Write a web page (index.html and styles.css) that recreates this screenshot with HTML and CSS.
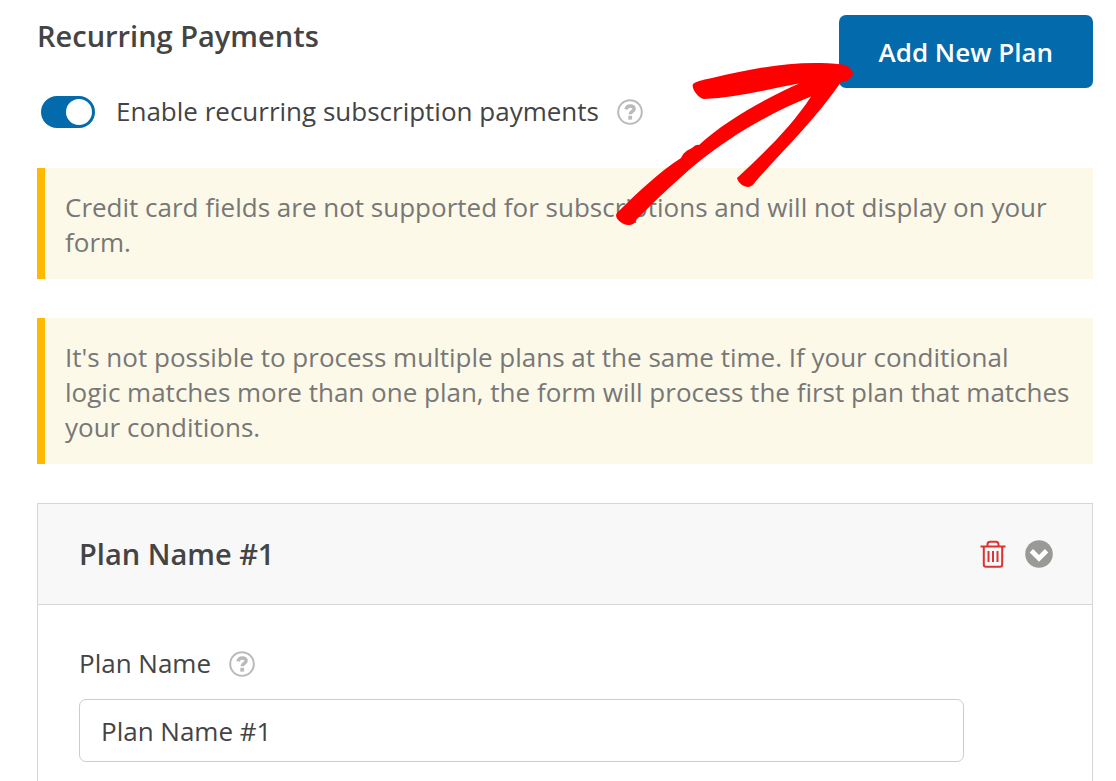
FILE: index.html
```html
<!DOCTYPE html>
<html lang="en">
<head>
<meta charset="UTF-8" />
<meta name="viewport" content="width=device-width, initial-scale=1" />
<title>Recurring Payments</title>
<link rel="stylesheet" href="styles.css">
</head>
<body>

<main class="settings">
  <header class="settings-header">
    <div class="settings-intro">
      <h2>Recurring Payments</h2>
      <div class="toggle-row">
        <input class="toggle" type="checkbox" role="switch" id="enableRecurring" checked />
        <label for="enableRecurring">Enable recurring subscription payments</label>
        <button class="icon-btn" type="button" aria-label="Help: recurring payments">
          <svg viewBox="0 0 26 26" width="26" height="26">
            <circle cx="13" cy="13" r="11.8" fill="none" stroke="#bababa" stroke-width="2" />
            <path d="M9 10.400C9.500 8 11 7 13.200 7c2.500 0 3.900 1.100 3.900 2.900 0 2.800-3.900 2.400-3.900 5.300" fill="none" stroke="#bababa" stroke-width="3.400" />
            <rect x="11.300" y="16.800" width="3.800" height="3.800" fill="#bababa" />
          </svg>
        </button>
      </div>
    </div>
    <div class="add-plan">
      <button class="add-btn" type="button">Add New Plan</button>
      <svg class="arrow" viewBox="608 60 252 170" width="252" height="170" aria-hidden="true">
        <path fill="#f00" d="M693 84C691 88 698 98 704 99C735 98 769 89 799 83.500C767 98 727 119 699 145Q696 144 692 148C685 151 683 154 681 158C658 173 637 193 617 213C613 218 623 225 628 225C633 225 635 223 636 220C658 198 677 180 696 164C732 135 770 113 811 96.500C792 126 765 152 737 178C738 183 744 187 748 187C751 187 754 184 756 181C784 149 816 119 841 82C847 82 853 78 853 73C852 69 848 65 842 64.500C801 60 762 66 712 78Q696 81 693 84Z" />
      </svg>
    </div>
  </header>

  <p class="notice">Credit card fields are not supported for subscriptions and will not display on your form.</p>
  <p class="notice">It's not possible to process multiple plans at the same time. If your conditional<br>
    logic matches more than one plan, the form will process the first plan that matches<br>
    your conditions.</p>

  <section class="plan">
    <div class="plan-head">
      <h3>Plan Name #1</h3>
      <div class="plan-actions">
        <button class="icon-btn" type="button" aria-label="Delete plan">
          <svg viewBox="0 0 26 28" width="26" height="28" fill="none" stroke="#dc3232" stroke-width="2">
            <path d="M.5 6.500h25M7.500 6V4.500C7.500 2.500 8.500 1.800 10 1.800h6c1.500 0 2.500.7 2.500 2.700V6M3.800 7v17.500c0 1.500.7 2.300 2.200 2.300h14c1.500 0 2.200-.8 2.200-2.300V7M8.500 11v11M13 11v11M17.500 11v11" />
          </svg>
        </button>
        <button class="icon-btn" type="button" aria-label="Collapse plan">
          <svg viewBox="0 0 28 28" width="28" height="28">
            <circle cx="14" cy="14" r="13.800" fill="#999996" />
            <path d="M6.400 10.700l7.600 7.700 7.600-7.700" fill="none" stroke="#fff" stroke-width="4.800" />
          </svg>
        </button>
      </div>
    </div>
    <div class="plan-body">
      <div class="field-label">
        <label for="planName">Plan Name</label>
        <button class="icon-btn" type="button" aria-label="Help: plan name">
          <svg viewBox="0 0 26 26" width="26" height="26">
            <circle cx="13" cy="13" r="11.8" fill="none" stroke="#bababa" stroke-width="2" />
            <path d="M9 10.400C9.500 8 11 7 13.200 7c2.500 0 3.900 1.100 3.900 2.900 0 2.800-3.900 2.400-3.900 5.300" fill="none" stroke="#bababa" stroke-width="3.400" />
            <rect x="11.300" y="16.800" width="3.800" height="3.800" fill="#bababa" />
          </svg>
        </button>
      </div>
      <input class="text-input" type="text" id="planName" value="Plan Name #1" />
    </div>
  </section>
</main>

</body>
</html>
```
FILE: styles.css
```css
* {
  box-sizing: border-box;
}
body {
  margin: 0;
  background: #fff;
  color: #444;
  font-family: "Open Sans", "Noto Sans", sans-serif;
  font-size: 26px;
  line-height: 35px;
}
h2, h3, p {
  margin: 0;
}
h2, h3 {
  font-size: 29px;
  font-weight: 600;
  line-height: 42px;
}
.settings {
  display: flex;
  flex-direction: column;
  min-height: 100vh;
  padding: 15px 23px 0 37px;
}
.settings-header {
  display: flex;
  justify-content: space-between;
  align-items: flex-start;
  margin-bottom: 39px;
}
.toggle-row {
  display: flex;
  align-items: center;
  margin-top: 37px;
  padding-left: 4px;
}
.toggle {
  appearance: none;
  width: 54px;
  height: 32px;
  margin: 0 21px 0 0;
  padding: 3px;
  border-radius: 16px;
  background: #036aab;
  display: flex;
  cursor: pointer;
}
.toggle::before {
  content: "";
  width: 26px;
  height: 26px;
  border-radius: 50%;
  background: #fff;
}
.toggle:checked {
  justify-content: flex-end;
}
.icon-btn {
  display: flex;
  padding: 0;
  border: none;
  background: none;
  cursor: pointer;
}
.toggle-row .icon-btn,
.field-label .icon-btn {
  margin-left: 18px;
}
.add-plan {
  position: relative;
}
.add-btn {
  padding: 19px 40px 18px;
  border: none;
  border-radius: 7px;
  background: #036aab;
  color: #fff;
  font: inherit;
  font-weight: 600;
  line-height: 36px;
  white-space: nowrap;
  cursor: pointer;
}
.arrow {
  position: absolute;
  top: 45px;
  left: -231px;
  pointer-events: none;
}
.notice {
  margin-bottom: 39px;
  padding: 22px 20px 19px;
  border-left: 8px solid #ffb900;
  background: #fcf9e8;
  color: #777;
}
.plan {
  flex: 1;
  border: 1px solid #d6d6d6;
  border-bottom: none;
}
.plan-head {
  display: flex;
  justify-content: space-between;
  align-items: center;
  padding: 29px 39px 29px 41px;
  border-bottom: 1px solid #d6d6d6;
  background: #f8f8f8;
}
.plan-actions {
  display: flex;
  align-items: center;
  gap: 19px;
}
.plan-body {
  padding: 41px;
}
.field-label {
  display: flex;
  align-items: center;
  margin-bottom: 18px;
}
.text-input {
  display: block;
  width: 91%;
  height: 63px;
  padding: 0 21px;
  border: 1px solid #ccc;
  border-radius: 7px;
  background: #fff;
  color: #444;
  font: inherit;
}
```
